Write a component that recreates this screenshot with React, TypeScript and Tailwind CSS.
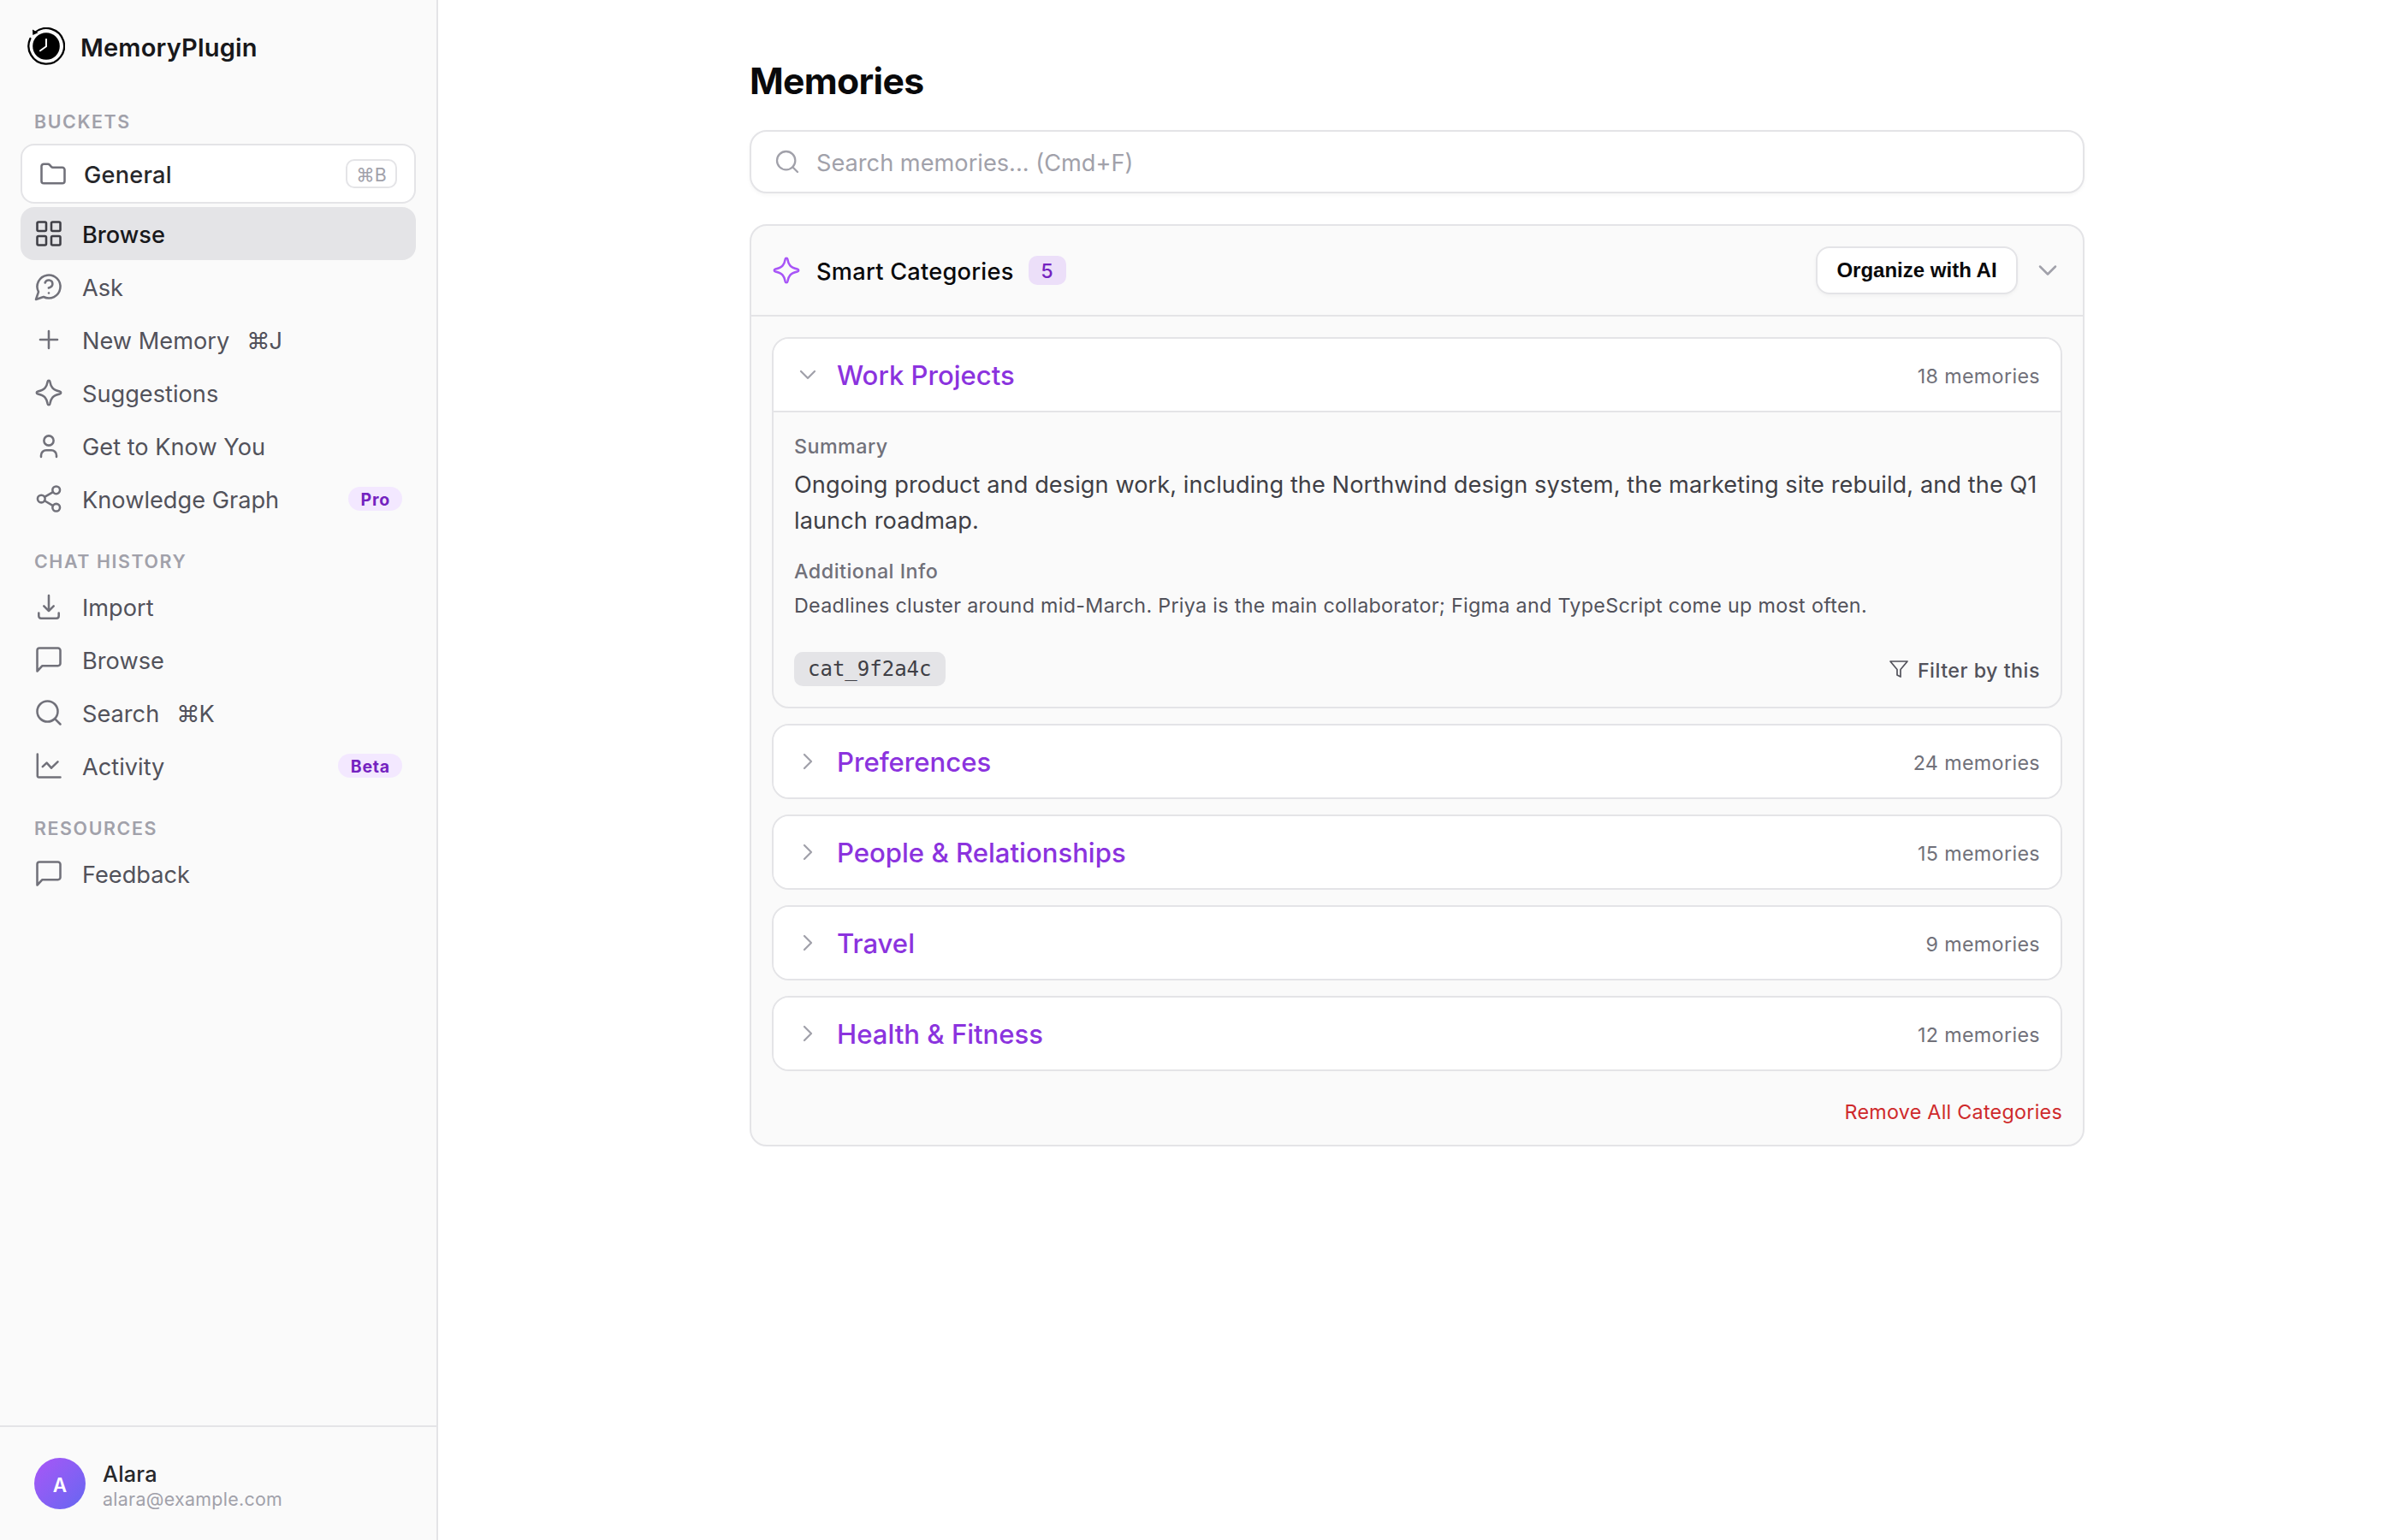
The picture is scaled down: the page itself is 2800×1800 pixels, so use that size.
import type { ReactNode } from "react";

const icons = {
  folder: (
    <path d="M3 6.200A1.700 1.700 0 0 1 4.700 4.500h3.300a1.700 1.700 0 0 1 1.300.600l1.300 1.500a1.700 1.700 0 0 0 1.300.600h7.400A1.700 1.700 0 0 1 21 8.900v8.900a1.700 1.700 0 0 1-1.700 1.700H4.700A1.700 1.700 0 0 1 3 17.800z" />
  ),
  grid: (
    <>
      <rect x="3" y="3" width="7" height="7" rx="1" />
      <rect x="14" y="3" width="7" height="7" rx="1" />
      <rect x="14" y="14" width="7" height="7" rx="1" />
      <rect x="3" y="14" width="7" height="7" rx="1" />
    </>
  ),
  ask: (
    <>
      <path d="M7.900 20A9 9 0 1 0 4 16.100L2 22Z" />
      <path d="M9.090 9a3 3 0 0 1 5.830 1c0 2-3 3-3 3" />
      <path d="M12 17h.01" />
    </>
  ),
  plus: <path d="M5.300 12h13.400M12 5.300v13.400" />,
  sparkle: (
    <path d="M12 2.500c.5 0 .8.400.900.900.700 4 2.100 6.400 7.600 7.600 1.300.300 1.300 1.700 0 2-5.500 1.200-6.900 3.600-7.600 7.600-.100.500-.400.900-.900.900s-.800-.400-.900-.900c-.700-4-2.100-6.400-7.600-7.600-1.300-.300-1.300-1.700 0-2 5.500-1.200 6.900-3.600 7.600-7.600.100-.500.400-.900.900-.900z" />
  ),
  user: (
    <>
      <circle cx="12" cy="8" r="3.750" />
      <path d="M6 20.700v-1.200a4 4 0 0 1 4-4h4a4 4 0 0 1 4 4v1.200" />
    </>
  ),
  share: (
    <>
      <circle cx="17.800" cy="5.200" r="2.900" />
      <circle cx="6.200" cy="12" r="2.900" />
      <circle cx="17.800" cy="18.800" r="2.900" />
      <path d="m8.700 13.500 6.600 3.850M15.300 6.700l-6.600 3.850" />
    </>
  ),
  download: <path d="M12 3.300v12M8.200 11.600l3.800 3.800 3.800-3.800M4.200 17v2.400A1.800 1.800 0 0 0 6 21.200h12a1.800 1.800 0 0 0 1.800-1.800V17" />,
  message: <path d="M21 15a1.800 1.800 0 0 1-1.800 1.800H7L3 21V4.800A1.800 1.800 0 0 1 4.800 3h14.400A1.800 1.800 0 0 1 21 4.800z" />,
  search: (
    <>
      <circle cx="11" cy="11" r="8" />
      <path d="m21 21-4.300-4.300" />
    </>
  ),
  chart: <path d="M3.200 3v17a1 1 0 0 0 1 1H21M7.200 12.800l3.200-3.100 3.600 4.100 5-4.900" />,
  down: <path d="m6 9 6 6 6-6" />,
  right: <path d="m9 6 6 6-6 6" />,
  filter: <path d="M22 3H2l8 9.460V19l4 2v-8.540z" />,
};

type IconName = keyof typeof icons;

function Icon({ name, className }: { name: IconName; className?: string }) {
  return (
    <svg
      viewBox="0 0 24 24"
      fill="none"
      stroke="currentColor"
      strokeWidth={1.700}
      strokeLinecap="round"
      strokeLinejoin="round"
      className={`shrink-0 ${className ?? ""}`}
    >
      {icons[name]}
    </svg>
  );
}

function Logo() {
  return (
    <svg viewBox="0 0 44 44" className="size-11 shrink-0" fill="none">
      <circle cx="22" cy="22" r="15.800" fill="#000" />
      <path d="M9 5.800A20.800 20.800 0 1 1 3.400 13" stroke="#000" strokeWidth="2.300" strokeLinecap="round" />
      <path d="M6 2.500 12.500 6.300 6.300 9z" fill="#000" />
      <path d="M22 14v8.300l-7 5" stroke="#fff" strokeWidth="2" strokeLinecap="round" strokeLinejoin="round" />
    </svg>
  );
}

interface NavEntry {
  icon: IconName;
  label: string;
  shortcut?: string;
  badge?: string;
  active?: boolean;
}

const bucketNav: NavEntry[] = [
  { icon: "grid", label: "Browse", active: true },
  { icon: "ask", label: "Ask" },
  { icon: "plus", label: "New Memory", shortcut: "⌘J" },
  { icon: "sparkle", label: "Suggestions" },
  { icon: "user", label: "Get to Know You" },
  { icon: "share", label: "Knowledge Graph", badge: "Pro" },
];

const historyNav: NavEntry[] = [
  { icon: "download", label: "Import" },
  { icon: "message", label: "Browse" },
  { icon: "search", label: "Search", shortcut: "⌘K" },
  { icon: "chart", label: "Activity", badge: "Beta" },
];

const categories = [
  { name: "Preferences", count: 24 },
  { name: "People & Relationships", count: 15 },
  { name: "Travel", count: 9 },
  { name: "Health & Fitness", count: 12 },
];

function NavItem({ icon, label, shortcut, badge, active }: NavEntry) {
  return (
    <a
      className={`flex h-[62px] items-center rounded-2xl pr-4 pl-[15px] text-[27.2px] ${
        active ? "bg-[#e4e4e7] font-medium text-[#18181b]" : "text-[#52525b]"
      }`}
    >
      <Icon name={icon} className={`size-9 ${active ? "text-[#3f3f46]" : "text-[#71717a]"}`} />
      <span className="ml-[21px] pt-[5px]">{label}</span>
      {shortcut && <span className="ml-5 pt-[5px] tracking-[-1px]">{shortcut}</span>}
      {badge && (
        <span className="ml-auto flex h-7 items-center rounded-full bg-[#f3e8ff] pt-[3px] pr-3.5 pl-[15px] text-[19.5px] font-bold tracking-[0.8px] text-[#7423c0]">
          {badge}
        </span>
      )}
    </a>
  );
}

function SectionLabel({ children }: { children: ReactNode }) {
  return (
    <div className="flex h-16 items-end pb-2 pl-4 text-[21.4px] leading-7 font-semibold tracking-[1.6px] text-[#a1a1aa]">
      {children}
    </div>
  );
}

function CategoryHeader({ name, count, open }: { name: string; count: number; open?: boolean }) {
  return (
    <div className="flex h-[84px] items-center bg-white px-6">
      <Icon name={open ? "down" : "right"} className="size-8 text-[#a1a1aa]" />
      <span className="ml-[18px] pt-[3px] text-[31.1px] font-medium text-[#8b33de]">{name}</span>
      <span className="ml-auto pt-[5px] text-[23.3px] tracking-[0.35px] text-[#71717a]">{count} memories</span>
    </div>
  );
}

export default function App() {
  return (
    <div className="flex h-[1800px] w-[2800px] bg-white font-['Inter',sans-serif] text-[#09090b]">
      <aside className="flex w-[512px] shrink-0 flex-col border-r-2 border-[#e4e4e7] bg-[#fafafa]">
        <div className="flex h-[100px] items-center gap-[18px] pt-2 pl-8">
          <Logo />
          <span className="pt-[3px] text-[29.1px] font-semibold tracking-[0.15px] text-[#18181b]">MemoryPlugin</span>
        </div>
        <nav className="flex flex-1 flex-col px-6">
          <SectionLabel>BUCKETS</SectionLabel>
          <div className="mt-1 mb-1 flex h-[70px] items-center rounded-2xl border-2 border-[#e4e4e7] bg-white pr-5 pl-[18px] text-[27.2px] font-medium tracking-[0.2px] text-[#27272a]">
            <Icon name="folder" className="size-9 text-[#71717a]" />
            <span className="ml-[18px] pt-1">General</span>
            <kbd className="ml-auto flex h-[34px] w-[60px] items-center justify-center rounded-[10px] border-2 border-[#e4e4e7] pt-[3px] font-['Inter',sans-serif] text-[21.4px] font-normal tracking-normal text-[#a1a1aa]">
              ⌘B
            </kbd>
          </div>
          {bucketNav.map((item) => (
            <NavItem key={item.label} {...item} />
          ))}
          <SectionLabel>CHAT HISTORY</SectionLabel>
          {historyNav.map((item) => (
            <NavItem key={item.label} {...item} />
          ))}
          <SectionLabel>RESOURCES</SectionLabel>
          <NavItem icon="message" label="Feedback" />
        </nav>
        <div className="flex h-[134px] items-center gap-5 border-t-2 border-[#e4e4e7] pl-10">
          <div className="flex size-[60px] items-center justify-center rounded-full bg-linear-135 from-[#a855f7] to-[#6366f1] pt-1 text-[22.500px] font-semibold text-white">
            A
          </div>
          <div className="flex flex-col pt-[5px]">
            <span className="text-[25.3px] leading-[30px] font-medium tracking-[0.2px] text-[#27272a]">Alara</span>
            <span className="text-[21.4px] leading-7 tracking-[0.3px] text-[#a1a1aa]">alara@example.com</span>
          </div>
        </div>
      </aside>

      <main className="flex flex-1 flex-col items-center pt-16">
        <div className="w-[1560px]">
          <h1 className="h-[88px] pt-px text-[42.7px] leading-[60px] font-bold tracking-[-0.7px]">Memories</h1>
          <div className="flex h-[74px] items-center rounded-[20px] border-2 border-[#e4e4e7] bg-white pl-[26px] text-[27.2px] text-[#a1a1aa] shadow-[0_2px_4px_rgba(0,0,0,0.04)]">
            <Icon name="search" className="size-8" />
            <span className="ml-[18px] pt-[5px]">Search memories... (Cmd+F)</span>
          </div>

          <section className="mt-9 h-[1078px] overflow-hidden rounded-[20px] border-2 border-[#e4e4e7] bg-[#fafafa]">
            <header className="flex h-[106px] items-center border-b-2 border-[#e4e4e7] pr-[23px] pl-[23px]">
              <Icon name="sparkle" className="size-9 text-[#a855f7]" />
              <h2 className="ml-[17px] pt-[5px] text-[27.2px] font-medium tracking-[0.25px]">Smart Categories</h2>
              <span className="ml-[17px] flex h-[34px] w-11 items-center justify-center rounded-[10px] bg-[#ecdff9] pt-[3px] text-[23.3px] font-medium text-[#7423c0]">
                5
              </span>
              <button className="ml-auto h-14 w-[236px] rounded-2xl border-2 border-[#e4e4e7] bg-white font-['Liberation_Sans',sans-serif] text-[24px] font-bold shadow-[0_2px_4px_rgba(0,0,0,0.04)]">
                Organize with AI
              </button>
              <Icon name="down" className="ml-[17px] size-9 text-[#a1a1aa]" />
            </header>

            <div className="flex flex-col gap-[18px] px-6 pt-6">
              <article className="h-[434px] overflow-hidden rounded-[20px] border-2 border-[#e4e4e7]">
                <CategoryHeader name="Work Projects" count={18} open />
                <div className="border-t-2 border-[#e4e4e7] px-6 pt-6">
                  <h3 className="text-[23.3px] leading-8 font-medium tracking-[0.45px] text-[#71717a]">Summary</h3>
                  <p className="mt-2 text-[27.2px] leading-[42px] tracking-[0.06px] text-[#3f3f46]">
                    Ongoing product and design work, including the Northwind design system, the marketing site rebuild,
                    and the Q1 launch roadmap.
                  </p>
                  <h3 className="mt-[22px] text-[23.3px] leading-8 font-medium tracking-[0.5px] text-[#71717a]">
                    Additional Info
                  </h3>
                  <p className="mt-[6px] text-[23.3px] leading-9 tracking-[0.3px] text-[#52525b]">
                    Deadlines cluster around mid-March. Priya is the main collaborator; Figma and TypeScript come up
                    most often.
                  </p>
                  <div className="mt-9 flex items-center justify-between">
                    <code className="flex h-10 items-center rounded-[10px] bg-[#e4e4e7] px-4 font-['DejaVu_Sans_Mono',monospace] text-[24px] text-[#3f3f46]">
                      cat_9f2a4c
                    </code>
                    <span className="flex items-center text-[23.3px] font-medium tracking-[0.48px] text-[#52525b]">
                      <Icon name="filter" className="mr-2.5 size-6" />
                      <span className="pt-[5px]">Filter by this</span>
                    </span>
                  </div>
                </div>
              </article>
              {categories.map((category) => (
                <article
                  key={category.name}
                  className="overflow-hidden rounded-[20px] border-2 border-[#e4e4e7] bg-white"
                >
                  <CategoryHeader {...category} />
                </article>
              ))}
            </div>
            <div className="mt-8 px-6 text-right text-[23.3px] leading-8 tracking-[0.27px] text-[#cf2a2c]">
              Remove All Categories
            </div>
          </section>
        </div>
      </main>
    </div>
  );
}
